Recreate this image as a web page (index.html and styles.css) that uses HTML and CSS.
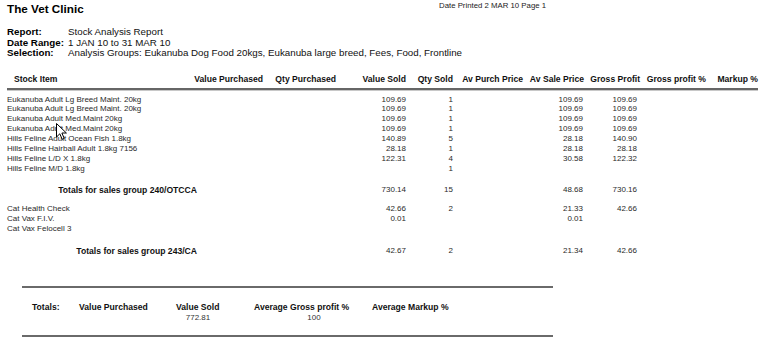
FILE: index.html
```html
<!DOCTYPE html>
<html>
<head>
<meta charset="utf-8">
<title>Stock Analysis Report</title>
<link rel="stylesheet" href="styles.css">
</head>
<body>
<div class="page">
  <div class="top">
    <div class="title">The Vet Clinic</div>
    <div class="printed">Date Printed 2 MAR 10 Page 1</div>
  </div>

  <div class="meta">
    <div class="k">Report:</div><div class="v">Stock Analysis Report</div>
    <div class="k">Date Range:</div><div class="v">1 JAN 10 to 31 MAR 10</div>
    <div class="k">Selection:</div><div class="v">Analysis Groups: Eukanuba Dog Food 20kgs, Eukanuba large breed, Fees, Food, Frontline</div>
  </div>

  <div class="row head">
    <div class="c1 first">Stock Item</div>
    <div class="c2">Value Purchased</div>
    <div class="c3">Qty Purchased</div>
    <div class="c4">Value Sold</div>
    <div class="c5">Qty Sold</div>
    <div class="c6">Av Purch Price</div>
    <div class="c7">Av Sale Price</div>
    <div class="c8">Gross Profit</div>
    <div class="c9">Gross profit %</div>
    <div class="c10">Markup %</div>
  </div>

  <div class="group g1">
    <div class="row"><div class="c1">Eukanuba Adult Lg Breed Maint. 20kg</div><div class="c4">109.69</div><div class="c5">1</div><div class="c7">109.69</div><div class="c8">109.69</div></div>
    <div class="row"><div class="c1">Eukanuba Adult Lg Breed Maint. 20kg</div><div class="c4">109.69</div><div class="c5">1</div><div class="c7">109.69</div><div class="c8">109.69</div></div>
    <div class="row"><div class="c1">Eukanuba Adult Med.Maint 20kg</div><div class="c4">109.69</div><div class="c5">1</div><div class="c7">109.69</div><div class="c8">109.69</div></div>
    <div class="row"><div class="c1">Eukanuba Adult Med.Maint 20kg</div><div class="c4">109.69</div><div class="c5">1</div><div class="c7">109.69</div><div class="c8">109.69</div></div>
    <div class="row"><div class="c1">Hills Feline Adult Ocean Fish 1.8kg</div><div class="c4">140.89</div><div class="c5">5</div><div class="c7">28.18</div><div class="c8">140.90</div></div>
    <div class="row"><div class="c1">Hills Feline Hairball Adult 1.8kg 7156</div><div class="c4">28.18</div><div class="c5">1</div><div class="c7">28.18</div><div class="c8">28.18</div></div>
    <div class="row"><div class="c1">Hills Feline L/D X 1.8kg</div><div class="c4">122.31</div><div class="c5">4</div><div class="c7">30.58</div><div class="c8">122.32</div></div>
    <div class="row"><div class="c1">Hills Feline M/D 1.8kg</div><div class="c5">1</div></div>
  </div>

  <div class="row total t1">
    <div class="label">Totals for sales group 240/OTCCA</div><div class="c4">730.14</div><div class="c5">15</div><div class="c7">48.68</div><div class="c8">730.16</div>
  </div>

  <div class="group g2">
    <div class="row"><div class="c1">Cat Health Check</div><div class="c4">42.66</div><div class="c5">2</div><div class="c7">21.33</div><div class="c8">42.66</div></div>
    <div class="row"><div class="c1">Cat Vax F.I.V.</div><div class="c4">0.01</div><div class="c7">0.01</div></div>
    <div class="row"><div class="c1">Cat Vax Felocell 3</div></div>
  </div>

  <div class="row total t2">
    <div class="label">Totals for sales group 243/CA</div><div class="c4">42.67</div><div class="c5">2</div><div class="c7">21.34</div><div class="c8">42.66</div>
  </div>

  <div class="summary">
    <div class="scol s-tot"><div class="sl">Totals:</div></div>
    <div class="scol s-vp"><div class="sl">Value Purchased</div></div>
    <div class="scol s-vs"><div class="sl">Value Sold</div><div class="sv">772.81</div></div>
    <div class="scol s-gp"><div class="sl">Average Gross profit %</div><div class="sv">100</div></div>
    <div class="scol s-mk"><div class="sl">Average Markup %</div></div>
  </div>

  <svg class="cursor" width="12" height="18" viewBox="0 0 12 18">
    <path d="M0.5 0.5 L0.5 14 L3.8 10.8 L6.2 16.3 L8.2 15.4 L5.9 10 L10.4 10 Z" fill="#fff" stroke="#000" stroke-width="1"/>
  </svg>
</div>
</body>
</html>
```

FILE: styles.css
```css
html, body {
  margin: 0;
  padding: 0;
  background: #fff;
}

body {
  font-family: "Liberation Sans", Arial, sans-serif;
  color: #2a2a2a;
}

.page {
  position: relative;
  width: 765px;
  height: 362px;
  padding: 0 7px;
  box-sizing: border-box;
}

.top {
  display: grid;
  grid-template-columns: 432px auto;
  height: 18px;
}

.title {
  font-size: 11.7px;
  font-weight: bold;
  line-height: 14px;
  padding-top: 2px;
  color: #000;
}

.printed {
  font-size: 7.8px;
  line-height: 12px;
  color: #222;
}

.meta {
  display: grid;
  grid-template-columns: 61px auto;
  margin-top: 9px;
  font-size: 9.75px;
  line-height: 10.5px;
  color: #111;
}

.meta .k {
  font-weight: bold;
  color: #000;
}

.row {
  display: grid;
  grid-template-columns: 173px 83px 73px 70px 47px 70px 61px 56px 66px 52px;
  font-size: 8px;
  line-height: 9.86px;
  white-space: nowrap;
}

.row > div {
  text-align: right;
}

.row > .c1 { grid-column: 1; text-align: left; }
.row > .c2 { grid-column: 2; }
.row > .c3 { grid-column: 3; }
.row > .c4 { grid-column: 4; }
.row > .c5 { grid-column: 5; }
.row > .c6 { grid-column: 6; }
.row > .c7 { grid-column: 7; padding-right: 1px; }
.row > .c8 { grid-column: 8; padding-right: 3px; }
.row > .c9 { grid-column: 9; }
.row > .c10 { grid-column: 10; }

.row.head {
  margin-top: 15px;
  font-size: 8.6px;
  font-weight: bold;
  line-height: 10px;
  color: #111;
  padding-bottom: 4px;
  border-bottom: 2px solid #666;
  box-shadow: 0 1px 0 #c8c8c8;
}

.row.head > div {
  padding-right: 0;
}

.row.head > .first {
  padding-left: 7px;
}

.group.g1 { margin-top: 5px; }
.group.g2 { margin-top: 9px; }

.row.total {
  line-height: 10px;
}

.row.total .label {
  grid-column: 1 / 3;
  padding-right: 66px;
  font-size: 8.6px;
  font-weight: bold;
  color: #111;
}

.row.total.t1 { margin-top: 12px; }
.row.total.t2 { margin-top: 12.5px; }

.summary {
  display: flex;
  margin-top: 30px;
  margin-left: 15px;
  width: 531px;
  box-sizing: border-box;
  padding: 14px 0 12px 10px;
  border-top: 2px solid #6a6a6a;
  border-bottom: 2px solid #6a6a6a;
  font-size: 8.6px;
  line-height: 10px;
}

.scol {
  display: flex;
  flex-direction: column;
  align-items: flex-start;
}

.sl {
  font-weight: bold;
  color: #111;
  white-space: nowrap;
}

.sv {
  font-size: 8px;
  margin-top: 1px;
  color: #333;
  text-align: center;
  box-sizing: border-box;
}

.s-tot { width: 47px; }
.s-vp { width: 97px; }
.s-vs { width: 78px; }
.s-vs .sv { width: 44px; }
.s-gp { width: 118px; }
.s-gp .sv { width: 96px; padding-left: 24px; }

.cursor {
  position: absolute;
  left: 56px;
  top: 123px;
}
```
